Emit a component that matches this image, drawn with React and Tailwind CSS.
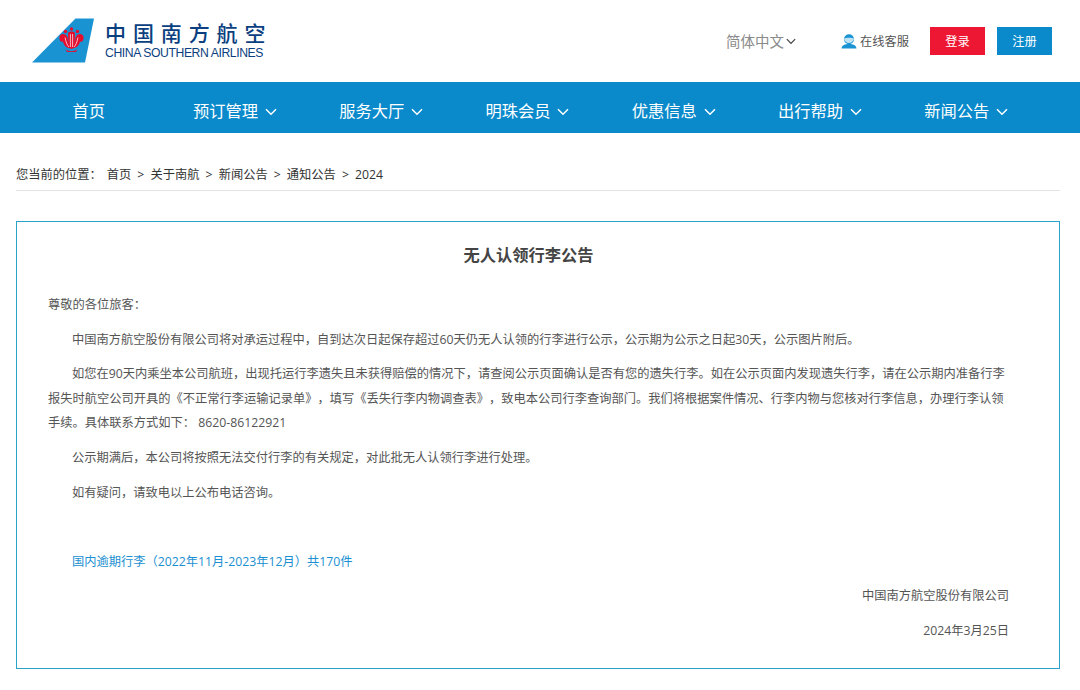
import React from "react";

const font = { fontFamily: '"Open Sans", "Noto Sans CJK SC", "Noto Sans", sans-serif' };

function Chevron({ className }) {
  return (
    <svg viewBox="0 0 12 8" className={className} fill="none" stroke="currentColor" strokeWidth="1.5">
      <path d="M1 1.2 L6 6.2 L11 1.2" />
    </svg>
  );
}

function Tail() {
  return (
    <svg viewBox="0 0 62 45" className="w-[62px] h-[45px] shrink-0">
      <path d="M43.5 0.5 L62 0.5 L53 44.5 L0 44.5 Z" fill="#1a93d3" />
      <g fill="#e60e2e">
        <path d="M27.5 19 C28 15 34 15 35.5 19.5 C36 23 37 27 39.5 30.5 C34 30 31.5 27 31 23.5 C29 24.5 27 22.5 27.5 19 Z" />
        <path d="M51.5 19 C51 15 45 15 43.5 19.5 C43 23 42 27 39.5 30.5 C45 30 47.5 27 48 23.5 C50 24.5 52 22.5 51.5 19 Z" />
        <path d="M33.5 31 C36 34 43 34 45.5 31 L44 34 L35 34 Z" />
        <path d="M36 15 C37 13 42 13 43 15 L42.5 29 L39.5 31 L36.5 29 Z" />
        <circle cx="33.5" cy="13.5" r="1.7" />
        <circle cx="45.5" cy="13.5" r="1.7" />
        <circle cx="39.5" cy="11" r="1.7" />
      </g>
      <g stroke="#fff" strokeWidth="0.7" fill="none">
        <path d="M38.4 16 V29 M40.6 16 V29 M33 19.5 C34 24 35 27 37 29 M46 19.5 C45 24 44 27 42 29" />
      </g>
    </svg>
  );
}

function ServiceIcon() {
  return (
    <svg viewBox="0 0 16 15" className="w-[16px] h-[15px]">
      <circle cx="8" cy="5.2" r="5" fill="#1a93d3" />
      <path d="M3 4.6 C5 3.6 11 3.6 13 4.6 C12.6 7.6 10.5 9 8 9 C5.5 9 3.4 7.6 3 4.6 Z" fill="#bfe3f5" />
      <path d="M0.5 14.5 C1 11 4 10 8 10 C12 10 15 11 15.5 14.5 Z" fill="#1a93d3" />
    </svg>
  );
}

const nav = ["预订管理", "服务大厅", "明珠会员", "优惠信息", "出行帮助", "新闻公告"];
const crumbs = ["关于南航", "新闻公告", "通知公告", "2024"];

function P({ children, indent = true }) {
  return <p className={`leading-[24.5px] mb-[10.2px] ${indent ? "indent-[24px]" : ""}`}>{children}</p>;
}

export default function App() {
  return (
    <div className="w-[1080px] h-[690px] overflow-hidden bg-white text-[#555555] [text-spacing-trim:space-all]" style={font}>
      <header className="h-[82px] flex items-center pl-[32px] pr-[28px]">
        <div className="flex items-center gap-[11px] mt-[-1px]">
          <Tail />
          <div className="flex flex-col text-[#0b3f7f]">
            <div className="text-[21px] leading-[25px] font-medium tracking-[6.9px] whitespace-nowrap">中国南方航空</div>
            <div className="text-[12.2px] leading-[15px] tracking-[-0.4px] whitespace-nowrap" style={{ fontFamily: '"Liberation Sans", sans-serif' }}>
              CHINA SOUTHERN AIRLINES
            </div>
          </div>
        </div>
        <div className="ml-auto flex items-center">
          <span className="mt-[2px] text-[14.5px] text-[#8a8a8a] whitespace-nowrap">简体中文</span>
          <Chevron className="w-[10px] h-[7px] ml-[2px] text-[#444444]" />
          <span className="ml-[45px] flex"><ServiceIcon /></span>
          <span className="mt-[2px] ml-[3px] text-[12.25px] text-[#555555] whitespace-nowrap">在线客服</span>
          <button className="ml-[21px] w-[55px] h-[28px] pt-[2px] bg-[#ee1733] text-white text-[12.25px]">登录</button>
          <button className="ml-[12px] w-[55px] h-[28px] pt-[2px] bg-[#0a8acb] text-white text-[12.25px]">注册</button>
        </div>
      </header>

      <nav className="h-[51px] bg-[#0a8acb] pl-[15.5px] pt-[8px]">
        <div className="w-[1024px] h-full grid grid-cols-7 items-center text-white text-[16.25px]">
          <div className="text-center">首页</div>
          {nav.map((n) => (
            <div key={n} className="flex items-center justify-center gap-[7px]">
              <span>{n}</span>
              <Chevron className="w-[12px] h-[8px]" />
            </div>
          ))}
        </div>
      </nav>

      <main className="px-[16px] pt-[32px]">
        <div className="h-[26px] mr-[4px] pt-[1px] border-b border-[#e4e4e4] flex items-start text-[12.25px] text-[#333333] leading-[18px] whitespace-nowrap">
          <span>您当前的位置：</span>
          <span className="ml-[5px]">首页</span>
          {crumbs.map((c) => (
            <React.Fragment key={c}>
              <span className="mx-[6.1px]">&gt;</span>
              <span>{c}</span>
            </React.Fragment>
          ))}
        </div>

        <section className="mt-[30px] mr-[4px] h-[448px] border border-[#2aa3c9] pl-[31px] pr-[50px] text-[12.25px]">
          <h1 className="mt-[21px] mb-[26px] text-center text-[16.25px] leading-[24px] font-bold text-[#444444]">无人认领行李公告</h1>
          <P indent={false}>尊敬的各位旅客：</P>
          <P>中国南方航空股份有限公司将对承运过程中，自到达次日起保存超过60天仍无人认领的行李进行公示，公示期为公示之日起30天，公示图片附后。</P>
          <P>如您在90天内乘坐本公司航班，出现托运行李遗失且未获得赔偿的情况下，请查阅公示页面确认是否有您的遗失行李。如在公示页面内发现遗失行李，请在公示期内准备行李报失时航空公司开具的《不正常行李运输记录单》，填写《丢失行李内物调查表》，致电本公司行李查询部门。我们将根据案件情况、行李内物与您核对行李信息，办理行李认领手续。具体联系方式如下： 8620-86122921</P>
          <P>公示期满后，本公司将按照无法交付行李的有关规定，对此批无人认领行李进行处理。</P>
          <P>如有疑问，请致电以上公布电话咨询。</P>
          <div className="h-[34.7px]" />
          <p className="leading-[24.5px] mb-[9.2px] indent-[24px]"><a className="text-[#1a8fd1]">国内逾期行李（2022年11月-2023年12月）共170件</a></p>
          <p className="leading-[24.5px] mb-[10.2px] text-right">中国南方航空股份有限公司</p>
          <p className="leading-[24.5px] text-right">2024年3月25日</p>
        </section>
      </main>
    </div>
  );
}
